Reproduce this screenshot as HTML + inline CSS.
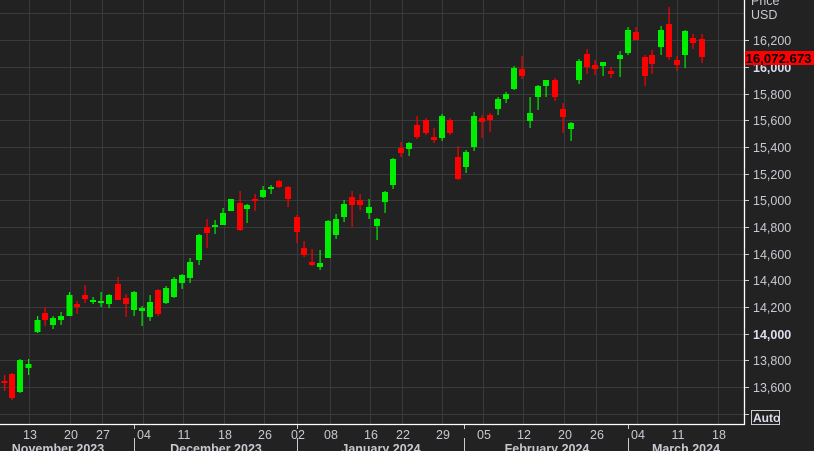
<!DOCTYPE html>
<html><head><meta charset="utf-8"><style>
html,body{margin:0;padding:0;background:#222;width:814px;height:451px;overflow:hidden}
svg{display:block}
text{font-family:"Liberation Sans",sans-serif}
</style></head><body>
<svg width="814" height="451" viewBox="0 0 814 451" xmlns="http://www.w3.org/2000/svg">
<rect width="814" height="451" fill="#222"/>
<g stroke="#3a3a3a" stroke-width="1">
<line x1="0" y1="13.5" x2="745" y2="13.5"/><line x1="0" y1="40.5" x2="745" y2="40.5"/><line x1="0" y1="67.5" x2="745" y2="67.5"/><line x1="0" y1="94.5" x2="745" y2="94.5"/><line x1="0" y1="120.5" x2="745" y2="120.5"/><line x1="0" y1="147.5" x2="745" y2="147.5"/><line x1="0" y1="174.5" x2="745" y2="174.5"/><line x1="0" y1="200.5" x2="745" y2="200.5"/><line x1="0" y1="227.5" x2="745" y2="227.5"/><line x1="0" y1="254.5" x2="745" y2="254.5"/><line x1="0" y1="280.5" x2="745" y2="280.5"/><line x1="0" y1="307.5" x2="745" y2="307.5"/><line x1="0" y1="334.5" x2="745" y2="334.5"/><line x1="0" y1="360.5" x2="745" y2="360.5"/><line x1="0" y1="387.5" x2="745" y2="387.5"/><line x1="0" y1="414.5" x2="745" y2="414.5"/>
<line x1="29.5" y1="0" x2="29.5" y2="424"/><line x1="70.5" y1="0" x2="70.5" y2="424"/><line x1="102.5" y1="0" x2="102.5" y2="424"/><line x1="143.5" y1="0" x2="143.5" y2="424"/><line x1="183.5" y1="0" x2="183.5" y2="424"/><line x1="224.5" y1="0" x2="224.5" y2="424"/><line x1="264.5" y1="0" x2="264.5" y2="424"/><line x1="297.5" y1="0" x2="297.5" y2="424"/><line x1="330.5" y1="0" x2="330.5" y2="424"/><line x1="370.5" y1="0" x2="370.5" y2="424"/><line x1="402.5" y1="0" x2="402.5" y2="424"/><line x1="442.5" y1="0" x2="442.5" y2="424"/><line x1="483.5" y1="0" x2="483.5" y2="424"/><line x1="523.5" y1="0" x2="523.5" y2="424"/><line x1="564.5" y1="0" x2="564.5" y2="424"/><line x1="596.5" y1="0" x2="596.5" y2="424"/><line x1="637.5" y1="0" x2="637.5" y2="424"/><line x1="677.5" y1="0" x2="677.5" y2="424"/><line x1="718.5" y1="0" x2="718.5" y2="424"/>
</g>
<g fill="#ff0000">
<rect x="4" y="375" width="1.2" height="16"/><rect x="1.5" y="381" width="6" height="2"/>
<rect x="11.5" y="373" width="1.2" height="27"/><rect x="9" y="374" width="6" height="24"/>
<rect x="44.5" y="307" width="1.2" height="19"/><rect x="42" y="313" width="6" height="7"/>
<rect x="76.5" y="301" width="1.2" height="13"/><rect x="74" y="304" width="6" height="3"/>
<rect x="84.5" y="285" width="1.2" height="18"/><rect x="82" y="295" width="6" height="4"/>
<rect x="117.5" y="277" width="1.2" height="23"/><rect x="115" y="284" width="6" height="16"/>
<rect x="125.5" y="294" width="1.2" height="23"/><rect x="123" y="298" width="6" height="6"/>
<rect x="157.5" y="289" width="1.2" height="27"/><rect x="155" y="290" width="6" height="24"/>
<rect x="206.5" y="219" width="1.2" height="29"/><rect x="204" y="227" width="6" height="6"/>
<rect x="239.5" y="191" width="1.2" height="40"/><rect x="237" y="203" width="6" height="27"/>
<rect x="254.5" y="194" width="1.2" height="17"/><rect x="252" y="199" width="6" height="2"/>
<rect x="278.5" y="180" width="1.2" height="8"/><rect x="276" y="181" width="6" height="6"/>
<rect x="287.5" y="186" width="1.2" height="21"/><rect x="285" y="187" width="6" height="12"/>
<rect x="296.5" y="215" width="1.2" height="28"/><rect x="294" y="217" width="6" height="15"/>
<rect x="303.5" y="241" width="1.2" height="16"/><rect x="301" y="248" width="6" height="7"/>
<rect x="311.5" y="249" width="1.2" height="17"/><rect x="309" y="262" width="6" height="3"/>
<rect x="351.5" y="191" width="1.2" height="36"/><rect x="349" y="197" width="6" height="8"/>
<rect x="359.5" y="194" width="1.2" height="16"/><rect x="357" y="200" width="6" height="5"/>
<rect x="400.5" y="142" width="1.2" height="15"/><rect x="398" y="148" width="6" height="5"/>
<rect x="416.5" y="116" width="1.2" height="23"/><rect x="414" y="125" width="6" height="12"/>
<rect x="425.5" y="118" width="1.2" height="17"/><rect x="423" y="120" width="6" height="13"/>
<rect x="433.5" y="128" width="1.2" height="15"/><rect x="431" y="137" width="6" height="3"/>
<rect x="449.5" y="118" width="1.2" height="17"/><rect x="447" y="120" width="6" height="13"/>
<rect x="457.5" y="146" width="1.2" height="34"/><rect x="455" y="157" width="6" height="22"/>
<rect x="481.5" y="115" width="1.2" height="23"/><rect x="479" y="118" width="6" height="4"/>
<rect x="489.5" y="113" width="1.2" height="19"/><rect x="487" y="115" width="6" height="5"/>
<rect x="521.5" y="56" width="1.2" height="23"/><rect x="519" y="69" width="6" height="7"/>
<rect x="554.5" y="78" width="1.2" height="23"/><rect x="552" y="80" width="6" height="17"/>
<rect x="562.5" y="103" width="1.2" height="30"/><rect x="560" y="109" width="6" height="8"/>
<rect x="586.5" y="49" width="1.2" height="25"/><rect x="584" y="54" width="6" height="13"/>
<rect x="594.5" y="60" width="1.2" height="15"/><rect x="592" y="65" width="6" height="4"/>
<rect x="610.5" y="67" width="1.2" height="11"/><rect x="608" y="71" width="6" height="3"/>
<rect x="635.5" y="27" width="1.2" height="13"/><rect x="633" y="32" width="6" height="8"/>
<rect x="644.5" y="55" width="1.2" height="31"/><rect x="642" y="57" width="6" height="19"/>
<rect x="651.5" y="50" width="1.2" height="24"/><rect x="649" y="55" width="6" height="9"/>
<rect x="668.5" y="7" width="1.2" height="53"/><rect x="666" y="24" width="6" height="33"/>
<rect x="676.5" y="56" width="1.2" height="15"/><rect x="674" y="60" width="6" height="5"/>
<rect x="692.5" y="34" width="1.2" height="15"/><rect x="690" y="38" width="6" height="5"/>
<rect x="701.5" y="34" width="1.2" height="29"/><rect x="699" y="39" width="6" height="18"/>
</g>
<g fill="#00ee00">
<rect x="19.5" y="359" width="1.2" height="34"/><rect x="17" y="360" width="6" height="32"/>
<rect x="28" y="359" width="1.2" height="16"/><rect x="25.5" y="364" width="6" height="4"/>
<rect x="37" y="316" width="1.2" height="17"/><rect x="34.5" y="320" width="6" height="12"/>
<rect x="52.5" y="316" width="1.2" height="13"/><rect x="50" y="318" width="6" height="7"/>
<rect x="60.5" y="312" width="1.2" height="13"/><rect x="58" y="316" width="6" height="4"/>
<rect x="69" y="292" width="1.2" height="24"/><rect x="66.5" y="295" width="6" height="21"/>
<rect x="92.5" y="297" width="1.2" height="7"/><rect x="90" y="300" width="6" height="2"/>
<rect x="100.5" y="292" width="1.2" height="15"/><rect x="98" y="301" width="6" height="2"/>
<rect x="108.5" y="294" width="1.2" height="14"/><rect x="106" y="295" width="6" height="9"/>
<rect x="133.5" y="291" width="1.2" height="25"/><rect x="131" y="292" width="6" height="18"/>
<rect x="141.5" y="306" width="1.2" height="20"/><rect x="139" y="308" width="6" height="3"/>
<rect x="149.5" y="295" width="1.2" height="26"/><rect x="147" y="302" width="6" height="15"/>
<rect x="165.5" y="286" width="1.2" height="18"/><rect x="163" y="288" width="6" height="15"/>
<rect x="173.5" y="277" width="1.2" height="21"/><rect x="171" y="279" width="6" height="18"/>
<rect x="181.5" y="274" width="1.2" height="15"/><rect x="179" y="275" width="6" height="8"/>
<rect x="189.5" y="258" width="1.2" height="25"/><rect x="187" y="262" width="6" height="16"/>
<rect x="198.5" y="234" width="1.2" height="31"/><rect x="196" y="235" width="6" height="25"/>
<rect x="214.5" y="220" width="1.2" height="14"/><rect x="212" y="225" width="6" height="2"/>
<rect x="222.5" y="208" width="1.2" height="17"/><rect x="220" y="213" width="6" height="12"/>
<rect x="230.5" y="199" width="1.2" height="12"/><rect x="228" y="199" width="6" height="12"/>
<rect x="246.5" y="204" width="1.2" height="19"/><rect x="244" y="205" width="6" height="4"/>
<rect x="262.5" y="186" width="1.2" height="12"/><rect x="260" y="190" width="6" height="7"/>
<rect x="270.5" y="185" width="1.2" height="9"/><rect x="268" y="187" width="6" height="2"/>
<rect x="319.5" y="250" width="1.2" height="20"/><rect x="317" y="263" width="6" height="4"/>
<rect x="327.5" y="220" width="1.2" height="38"/><rect x="325" y="221" width="6" height="37"/>
<rect x="335.5" y="214" width="1.2" height="25"/><rect x="333" y="219" width="6" height="16"/>
<rect x="343.5" y="200" width="1.2" height="22"/><rect x="341" y="204" width="6" height="13"/>
<rect x="368.5" y="199" width="1.2" height="20"/><rect x="366" y="207" width="6" height="6"/>
<rect x="376.5" y="218" width="1.2" height="22"/><rect x="374" y="219" width="6" height="7"/>
<rect x="384.5" y="191" width="1.2" height="22"/><rect x="382" y="192" width="6" height="10"/>
<rect x="392.5" y="158" width="1.2" height="31"/><rect x="390" y="159" width="6" height="26"/>
<rect x="408.5" y="142" width="1.2" height="14"/><rect x="406" y="143" width="6" height="6"/>
<rect x="441.5" y="114" width="1.2" height="27"/><rect x="439" y="116" width="6" height="22"/>
<rect x="465.5" y="150" width="1.2" height="23"/><rect x="463" y="152" width="6" height="15"/>
<rect x="473.5" y="112" width="1.2" height="39"/><rect x="471" y="116" width="6" height="31"/>
<rect x="497.5" y="97" width="1.2" height="18"/><rect x="495" y="99" width="6" height="10"/>
<rect x="505.5" y="92" width="1.2" height="11"/><rect x="503" y="94" width="6" height="5"/>
<rect x="513.5" y="66" width="1.2" height="24"/><rect x="511" y="68" width="6" height="21"/>
<rect x="529.5" y="97" width="1.2" height="31"/><rect x="527" y="113" width="6" height="8"/>
<rect x="537.5" y="85" width="1.2" height="25"/><rect x="535" y="86" width="6" height="11"/>
<rect x="545.5" y="80" width="1.2" height="17"/><rect x="543" y="80" width="6" height="6"/>
<rect x="570.5" y="122" width="1.2" height="19"/><rect x="568" y="123" width="6" height="6"/>
<rect x="578.5" y="59" width="1.2" height="25"/><rect x="576" y="61" width="6" height="19"/>
<rect x="602.5" y="62" width="1.2" height="14"/><rect x="600" y="62" width="6" height="4"/>
<rect x="619.5" y="51" width="1.2" height="26"/><rect x="617" y="55" width="6" height="4"/>
<rect x="627.5" y="27" width="1.2" height="28"/><rect x="625" y="30" width="6" height="23"/>
<rect x="660.5" y="26" width="1.2" height="29"/><rect x="658" y="30" width="6" height="17"/>
<rect x="684.5" y="30" width="1.2" height="38"/><rect x="682" y="31" width="6" height="24"/>
</g>
<g stroke="#fff" stroke-width="1.3">
<line x1="0" y1="424.5" x2="745" y2="424.5"/>
<line x1="744.5" y1="0" x2="744.5" y2="425"/>
</g>
<g stroke="#ccc" stroke-width="1">
<line x1="745" y1="40.5" x2="749" y2="40.5"/><line x1="745" y1="67.5" x2="749" y2="67.5"/><line x1="745" y1="94.5" x2="749" y2="94.5"/><line x1="745" y1="120.5" x2="749" y2="120.5"/><line x1="745" y1="147.5" x2="749" y2="147.5"/><line x1="745" y1="174.5" x2="749" y2="174.5"/><line x1="745" y1="200.5" x2="749" y2="200.5"/><line x1="745" y1="227.5" x2="749" y2="227.5"/><line x1="745" y1="254.5" x2="749" y2="254.5"/><line x1="745" y1="280.5" x2="749" y2="280.5"/><line x1="745" y1="307.5" x2="749" y2="307.5"/><line x1="745" y1="334.5" x2="749" y2="334.5"/><line x1="745" y1="360.5" x2="749" y2="360.5"/><line x1="745" y1="387.5" x2="749" y2="387.5"/><line x1="745" y1="414.5" x2="749" y2="414.5"/>
<line x1="134.5" y1="425" x2="134.5" y2="429"/><line x1="297.5" y1="425" x2="297.5" y2="429"/><line x1="464.5" y1="425" x2="464.5" y2="429"/><line x1="628.5" y1="425" x2="628.5" y2="429"/>
<line x1="134.5" y1="438" x2="134.5" y2="451"/><line x1="297.5" y1="438" x2="297.5" y2="451"/><line x1="464.5" y1="438" x2="464.5" y2="451"/><line x1="628.5" y1="438" x2="628.5" y2="451"/>
</g>
<g fill="#c8c8d2" font-size="12.5">
<text x="751" y="5">Price</text>
<text x="751" y="19">USD</text>
<text x="753" y="45">16,200</text>
<text x="753" y="72" font-weight="bold" fill="#dde">16,000</text>
<text x="753" y="99">15,800</text>
<text x="753" y="125">15,600</text>
<text x="753" y="152">15,400</text>
<text x="753" y="179">15,200</text>
<text x="753" y="205">15,000</text>
<text x="753" y="232">14,800</text>
<text x="753" y="259">14,600</text>
<text x="753" y="285">14,400</text>
<text x="753" y="312">14,200</text>
<text x="753" y="339" font-weight="bold" fill="#dde">14,000</text>
<text x="753" y="365">13,800</text>
<text x="753" y="392">13,600</text>
</g>
<rect x="751.5" y="410.5" width="28" height="14" fill="none" stroke="#ccc"/>
<text x="753" y="422" fill="#dde" font-size="12" font-weight="bold">Auto</text>
<rect x="745" y="51" width="69" height="14" fill="#f00"/>
<text x="745.5" y="63" fill="#000" font-size="13" font-weight="bold" textLength="66" lengthAdjust="spacingAndGlyphs">16,072.673</text>
<g fill="#c8c8d2" font-size="12.5" text-anchor="middle">
<text x="30" y="439">13</text><text x="71" y="439">20</text><text x="103" y="439">27</text><text x="144" y="439">04</text><text x="184" y="439">11</text><text x="225" y="439">18</text><text x="265" y="439">26</text><text x="298" y="439">02</text><text x="331" y="439">08</text><text x="371" y="439">16</text><text x="403" y="439">22</text><text x="443" y="439">29</text><text x="484" y="439">05</text><text x="524" y="439">12</text><text x="565" y="439">20</text><text x="597" y="439">26</text><text x="638" y="439">04</text><text x="678" y="439">11</text><text x="719" y="439">18</text>
</g>
<g fill="#c8c8d2" font-size="12.5" font-weight="bold" text-anchor="middle">
<text x="58" y="453">November 2023</text><text x="216" y="453">December 2023</text><text x="381" y="453">January 2024</text><text x="547" y="453">February 2024</text><text x="686" y="453">March 2024</text>
</g>
</svg>
</body></html>
